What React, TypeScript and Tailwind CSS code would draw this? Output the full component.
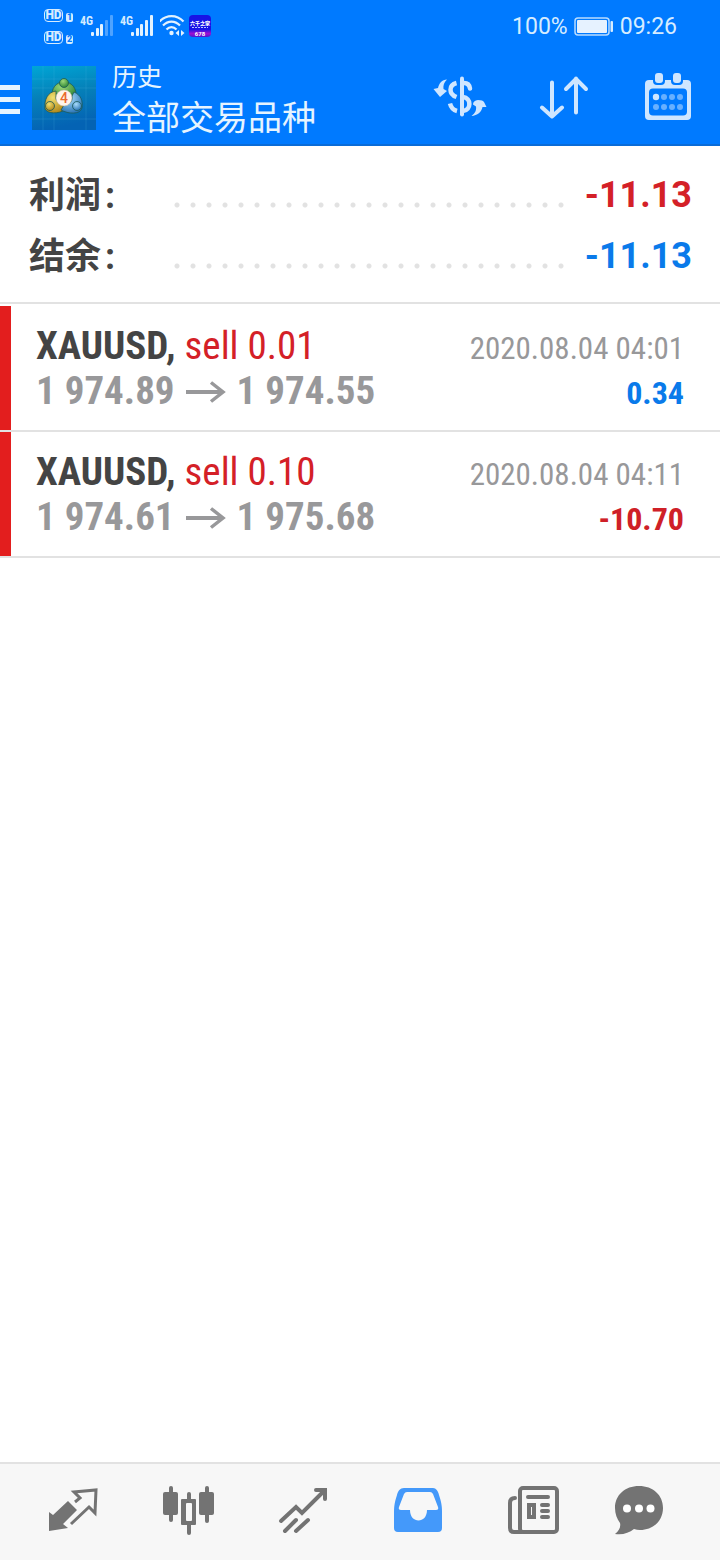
import { useState } from 'react';

const deals = [
  { symbol: 'XAUUSD', side: 'sell 0.01', open: '1 974.89', close: '1 974.55', time: '2020.08.04 04:01', profit: '0.34' },
  { symbol: 'XAUUSD', side: 'sell 0.10', open: '1 974.61', close: '1 975.68', time: '2020.08.04 04:11', profit: '-10.70' },
];

function HdBadge({ slot }: { slot: string }) {
  return (
    <div className="flex h-[13px] items-end gap-[3px]">
      <span className="flex h-[13px] w-[19px] items-center justify-center rounded-[4px] border border-[#d6ecff] text-[12px] font-black leading-none">
        HD
      </span>
      <span className="flex h-[9px] w-[7px] items-center justify-center rounded-[2px] bg-[#d6ecff] text-[9px] font-black leading-none text-[#007aff]">
        {slot}
      </span>
    </div>
  );
}

function Signal({ weak }: { weak?: boolean }) {
  const dim = weak ? 0.35 : 1;
  return (
    <div className="flex h-[22px] w-10 items-start">
      <span className="w-[11px] font-['Roboto_Condensed','Liberation_Sans_Narrow',sans-serif] text-[12px] font-bold leading-3">4G</span>
      <svg width="22" height="22" viewBox="0 0 22 22" fill="#e2f2ff" aria-hidden="true">
        <rect x="0" y="17" width="3" height="4" rx="1" />
        <rect x="5" y="13" width="3" height="8" rx="1" />
        <rect x="9" y="9" width="3" height="12" rx="1" />
        <rect x="14" y="5" width="3" height="16" rx="1" opacity={dim} />
        <rect x="19" y="0" width="3" height="21" rx="1" opacity={dim} />
      </svg>
    </div>
  );
}

function StatusBar() {
  return (
    <div className="flex h-[52px] items-center pl-11 pr-[43px] font-[Roboto,sans-serif] text-[#d6ecff]">
      <div className="flex w-9 flex-col gap-[9px]">
        <HdBadge slot="1" />
        <HdBadge slot="2" />
      </div>
      <Signal weak />
      <Signal />
      <svg width="26" height="22" viewBox="0 0 26 22" fill="none" stroke="#e2f2ff" strokeWidth="2.2" aria-hidden="true">
        <path d="M-0.500 6.500C6.500 -0.700 16.500 -0.700 23.500 6.500" />
        <path d="M3 10.500C8 5.300 15 5.300 20 10.500" />
        <path d="M6.500 14.500C9.500 11.200 13.500 11.200 16.500 14.500" />
        <circle cx="11.500" cy="18" r="2.200" fill="#e2f2ff" stroke="none" />
        <path d="M19 15v6l-3.500-3zM21 15v6l3.500-3z" fill="#e2f2ff" stroke="none" />
      </svg>
      <svg className="ml-[3px]" width="22" height="22" viewBox="0 0 22 22" aria-hidden="true">
        <defs>
          <linearGradient id="promo" x1="0" y1="0" x2="0" y2="1">
            <stop offset="0.65" stopColor="#1713e6" />
            <stop offset="0.85" stopColor="#a10fd0" />
            <stop offset="1" stopColor="#4a17d0" />
          </linearGradient>
        </defs>
        <rect width="22" height="22" rx="4" fill="url(#promo)" />
        <text x="11" y="10" textAnchor="middle" fontSize="5" fontWeight="900" fill="#fff" fontFamily="Noto Sans CJK SC, sans-serif">
          六千之家
        </text>
        <path d="M3 12.500h16" stroke="#b9c4ff" strokeWidth="1" strokeDasharray="2 1" />
        <text x="11" y="21" textAnchor="middle" fontSize="6" fontWeight="700" fill="#fff" fontFamily="Roboto, sans-serif">
          678
        </text>
      </svg>

      <div className="ml-auto flex items-center pt-0.5 text-[23px] leading-6">
        <span>100%</span>
        <svg className="mx-1.5" width="40" height="20" viewBox="0 0 40 20" aria-hidden="true">
          <rect x="1" y="1" width="34" height="17" rx="3" fill="none" stroke="#b8dcff" strokeWidth="1.500" />
          <rect x="3" y="3" width="30" height="13" rx="1" fill="#e6f2ff" />
          <rect x="36.500" y="4" width="2.500" height="11" rx="1" fill="#d6ecff" />
        </svg>
        <span>09:26</span>
      </div>
    </div>
  );
}

function Logo() {
  return (
    <svg width="64" height="64" viewBox="0 0 64 64" aria-hidden="true">
      <defs>
        <linearGradient id="logo-bg" x1="0" y1="0" x2="0.200" y2="1">
          <stop offset="0" stopColor="#00a6d6" />
          <stop offset="0.500" stopColor="#0580b8" />
          <stop offset="1" stopColor="#0463b4" />
        </linearGradient>
        <radialGradient id="logo-green" cx="0.4" cy="0.3" r="0.8">
          <stop offset="0" stopColor="#9cd878" />
          <stop offset="1" stopColor="#1f7a2c" />
        </radialGradient>
        <radialGradient id="logo-yellow" cx="0.4" cy="0.3" r="0.8">
          <stop offset="0" stopColor="#f0e070" />
          <stop offset="1" stopColor="#a87c10" />
        </radialGradient>
        <radialGradient id="logo-blue" cx="0.4" cy="0.3" r="0.8">
          <stop offset="0" stopColor="#a8dcfa" />
          <stop offset="1" stopColor="#1c69ae" />
        </radialGradient>
      </defs>
      <rect width="64" height="64" fill="url(#logo-bg)" />
      <path d="M11 0v64M22 0v64M54 0v64M0 13h64M0 22h64M0 53h64" stroke="#5cc4ea" strokeOpacity="0.18" />
      <g stroke="#1c5a58" strokeWidth="0.800">
        <path d="M20 32c-1-10 4-16 12-16s13 6 12 16l-5-2c-3-6-11-6-14 0z" fill="url(#logo-green)" />
        <path d="M24 25c-8 1-12 8-11 18 3 5 13 5 20 1l-1-5c-6-1-9-5-8-9z" fill="url(#logo-yellow)" />
        <path d="M42 26c7 3 9 9 8 16-2 7-14 6-21 2l3-5c6 0 9-4 8-9z" fill="url(#logo-blue)" />
        <circle cx="32" cy="17" r="4.500" fill="url(#logo-green)" />
        <circle cx="18" cy="40" r="4.500" fill="url(#logo-yellow)" />
        <circle cx="45" cy="40" r="4.500" fill="url(#logo-blue)" />
      </g>
      <circle cx="32" cy="32" r="8" fill="#fff4ea" stroke="#c9b9a0" strokeWidth="0.500" />
      <text x="32" y="37" textAnchor="middle" fontSize="14" fontWeight="500" fill="#ea6a30" fontFamily="Roboto, sans-serif">
        4
      </text>
    </svg>
  );
}

function CurrencyIcon() {
  return (
    <svg width="54" height="42" viewBox="0 0 54 42" fill="none" stroke="#cfe6ff" strokeWidth="4.500" aria-hidden="true">
      <path d="M29 2.500v36" strokeWidth="4" strokeLinecap="round" />
      <path d="M23.500 7c-8 2-8 11 0 14" />
      <path d="M31 7c3.500 0 5.500 2 6 5.500" strokeLinecap="round" />
      <path d="M30 21c8.500 1 8.500 13 0 14" />
      <path d="M17 27.500c1 4 3 6.500 7 7.500" />
      <path d="M0.500 13l4.500-1c1-5 4-8 9-8.500-3 3-4 6-3.500 9.500l3.500 2-7 6z" fill="#cfe6ff" stroke="none" />
      <path d="M53.500 31l-4 0c-1 5-5 8.500-11 9 4-3 5-6 4.500-9.500l-3-2q0-4 5-4.500 5 0 6 2z" fill="#cfe6ff" stroke="none" />
    </svg>
  );
}

function SortIcon() {
  return (
    <svg width="50" height="44" viewBox="0 0 50 44" fill="none" stroke="#cfe6ff" strokeWidth="4" strokeLinecap="round" strokeLinejoin="round" aria-hidden="true">
      <path d="M13 7.500v34M3 32.500l10 9 10-9" />
      <path d="M37 37.500v-34M27 14l10-10 10 10" />
    </svg>
  );
}

function CalendarIcon() {
  return (
    <svg width="46" height="48" viewBox="0 0 46 48" fill="#cfe6ff" aria-hidden="true">
      <rect y="7" width="46" height="40" rx="4" />
      <rect x="4" y="15.500" width="38" height="27" rx="4" fill="#007aff" />
      <rect x="8" y="-3" width="12" height="15" rx="4" fill="#007aff" />
      <rect x="26" y="-3" width="12" height="15" rx="4" fill="#007aff" />
      <rect x="10" y="0" width="8" height="10" rx="3" />
      <rect x="28" y="0" width="8" height="10" rx="3" />
      <circle cx="11" cy="24" r="3.200" />
      <g opacity="0.500">
        <circle cx="19" cy="24" r="3" />
        <circle cx="27" cy="24" r="3" />
        <circle cx="35" cy="24" r="3" />
        <circle cx="11" cy="34" r="3" />
        <circle cx="19" cy="34" r="3" />
        <circle cx="27" cy="34" r="3" />
        <circle cx="35" cy="34" r="3" />
      </g>
    </svg>
  );
}

function SummaryRow({ label, value, color }: { label: string; value: string; color: string }) {
  return (
    <div className="flex h-[61px] items-center">
      <dt className="flex w-[140px] items-baseline gap-1 pb-px text-[36px] font-bold leading-none text-[#444]">
        {label}
        <span className="font-[Roboto,sans-serif]">:</span>
      </dt>
      <dd className="flex flex-1 items-center">
        <span className="mr-5 mt-5 h-4 flex-1 bg-[radial-gradient(circle,#e2e2e2_2px,transparent_3px)] bg-[length:16px_16px] bg-repeat-x" />
        <span className={`font-[Roboto,sans-serif] text-[36px] font-bold leading-none ${color}`}>{value}</span>
      </dd>
    </div>
  );
}

function DealRow({ deal }: { deal: (typeof deals)[number] }) {
  const profitColor = deal.profit.startsWith('-') ? 'text-[#cf2027]' : 'text-[#0a7aea]';
  return (
    <li className="flex border-b-2 border-[#e2e2e2]">
      <span className="w-[11px] bg-[#e31e1e]" />
      <div className="flex h-[124px] flex-1 items-center justify-between pl-[25px] pr-9 font-['Roboto_Condensed','Liberation_Sans_Narrow',Roboto,sans-serif] leading-[45px]">
        <div className="pt-0.5 text-[39px]">
          <p className="text-[#d42027]">
            <b className="text-[#444]">{deal.symbol},</b> {deal.side}
          </p>
          <p className="flex items-center font-bold text-[#98989a]">
            {deal.open}
            <svg className="mx-2.5" width="42" height="22" viewBox="0 0 42 22" fill="none" stroke="#98989a" strokeWidth="4" aria-hidden="true">
              <path d="M1 11h37" />
              <path d="M26 1.500L38 11 26 20.500" strokeWidth="3.500" />
            </svg>
            {deal.close}
          </p>
        </div>
        <div className="pt-1.5 text-right">
          <p className="text-[31px] text-[#98989a]">{deal.time}</p>
          <p className={`text-[32px] font-bold ${profitColor}`}>{deal.profit}</p>
        </div>
      </div>
    </li>
  );
}

const tabs = [
  {
    name: '行情',
    icon: (
      <g>
        <path d="M27 16l5-4-6-6 22-2-1 23-6-6-18 17" fill="none" stroke="currentColor" strokeWidth="3" />
        <path d="M1 26l4 3L20 15l9 9-14 14 5 4-19 3z" fill="currentColor" />
      </g>
    ),
  },
  {
    name: '图表',
    icon: (
      <g fill="currentColor">
        <rect x="6" y="0" width="4" height="36" rx="2" />
        <rect x="0" y="6" width="15" height="23" rx="2" />
        <rect x="42" y="0" width="4" height="37" rx="2" />
        <rect x="36" y="6" width="15" height="23" rx="2" />
        <rect x="24" y="6" width="4" height="43" rx="2" />
        <rect x="18" y="13" width="15" height="26" rx="1" />
        <rect x="23" y="17" width="6" height="18" rx="1" fill="#f7f7f7" />
      </g>
    ),
  },
  {
    name: '交易',
    icon: (
      <g fill="none" stroke="currentColor" strokeWidth="4" strokeLinecap="round">
        <path d="M2 35l15-14 6 6L46 4" strokeLinejoin="miter" />
        <path d="M37 4h9v9" />
        <path d="M6 45l11-11M17 45l12-11" />
      </g>
    ),
  },
  {
    name: '历史',
    icon: (
      <g>
        <path d="M10 2h29c3 0 5 3 6 7 2 6 3 10 3 17v16q0 4-4 4H4q-4 0-4-4V26c0-7 1-11 3-17 1-4 3-7 7-7z" fill="currentColor" />
        <path d="M13 6h23q2 0 3 2l5 13q1 3-2 3h-9c0 14-17 14-17 0H7q-3 0-2-3l5-13q1-2 3-2z" fill="#f7f7f7" />
      </g>
    ),
  },
  {
    name: '新闻',
    icon: (
      <g fill="none" stroke="currentColor" strokeWidth="4" strokeLinecap="round">
        <rect x="11" y="2" width="37" height="44" rx="3" />
        <path d="M6 12q-5 0-5 5v25q0 4 4 4h8" />
        <path d="M19 11h20M33 19h6M33 25h6M33 31h6" />
        <rect x="20" y="19" width="5" height="12" />
      </g>
    ),
  },
  {
    name: '消息',
    icon: (
      <g>
        <path d="M24 0c14 0 24 9 24 22S38 44 25 44q-3 0-6-1c-5 4-11 6-19 5 4-3 6-7 5-11C2 33 0 28 0 22 0 9 10 0 24 0z" fill="currentColor" />
        <g fill="#fff">
          <circle cx="12" cy="22.500" r="4" />
          <circle cx="24" cy="22.500" r="4" />
          <circle cx="35.500" cy="22.500" r="4" />
        </g>
      </g>
    ),
  },
];

export default function App() {
  const [active, setActive] = useState('历史');

  return (
    <div className="flex min-h-screen flex-col bg-white font-['Noto_Sans_CJK_SC',sans-serif]">
      <header className="border-b-2 border-[#0a6cd8] bg-[#007aff]">
        <StatusBar />
        <div className="flex h-[92px] items-center pr-[29px]">
          <button type="button" aria-label="菜单" className="flex w-8 flex-col gap-[7px] pt-0.5">
            <span className="h-[5px] w-5 bg-[#e6f4ff]" />
            <span className="h-[5px] w-5 bg-[#e6f4ff]" />
            <span className="h-[5px] w-5 bg-[#e6f4ff]" />
          </button>
          <Logo />
          <div className="ml-4 pb-0.5 text-[#e6f4ff]">
            <p className="text-[25px] leading-[38px]">历史</p>
            <h1 className="text-[34px] leading-[44px]">全部交易品种</h1>
          </div>
          <div className="ml-auto flex items-center pb-0.5">
            <button type="button" aria-label="品种" className="mr-[52px]">
              <CurrencyIcon />
            </button>
            <button type="button" aria-label="排序" className="mr-14">
              <SortIcon />
            </button>
            <button type="button" aria-label="日期">
              <CalendarIcon />
            </button>
          </div>
        </div>
      </header>

      <main className="flex-1">
        <dl className="border-b-2 border-[#e2e2e2] pb-4 pl-[29px] pr-7 pt-[18px]">
          <SummaryRow label="利润" value="-11.13" color="text-[#d42027]" />
          <SummaryRow label="结余" value="-11.13" color="text-[#0a7aea]" />
        </dl>
        <ul className="pt-0.5">
          {deals.map((deal) => (
            <DealRow key={deal.time} deal={deal} />
          ))}
        </ul>
      </main>

      <nav className="flex h-[98px] items-center border-t-2 border-[#e2e2e2] bg-[#f7f7f7] pb-0.5 pl-4 pr-8">
        {tabs.map((tab) => (
          <button
            key={tab.name}
            type="button"
            aria-label={tab.name}
            onClick={() => setActive(tab.name)}
            className={`flex flex-1 justify-center last:w-24 last:flex-none ${active === tab.name ? 'text-[#4499fa]' : 'text-[#737373]'}`}
          >
            <svg className="overflow-visible" width="51" height="50" viewBox="0 0 51 50" aria-hidden="true">
              {tab.icon}
            </svg>
          </button>
        ))}
      </nav>
    </div>
  );
}
